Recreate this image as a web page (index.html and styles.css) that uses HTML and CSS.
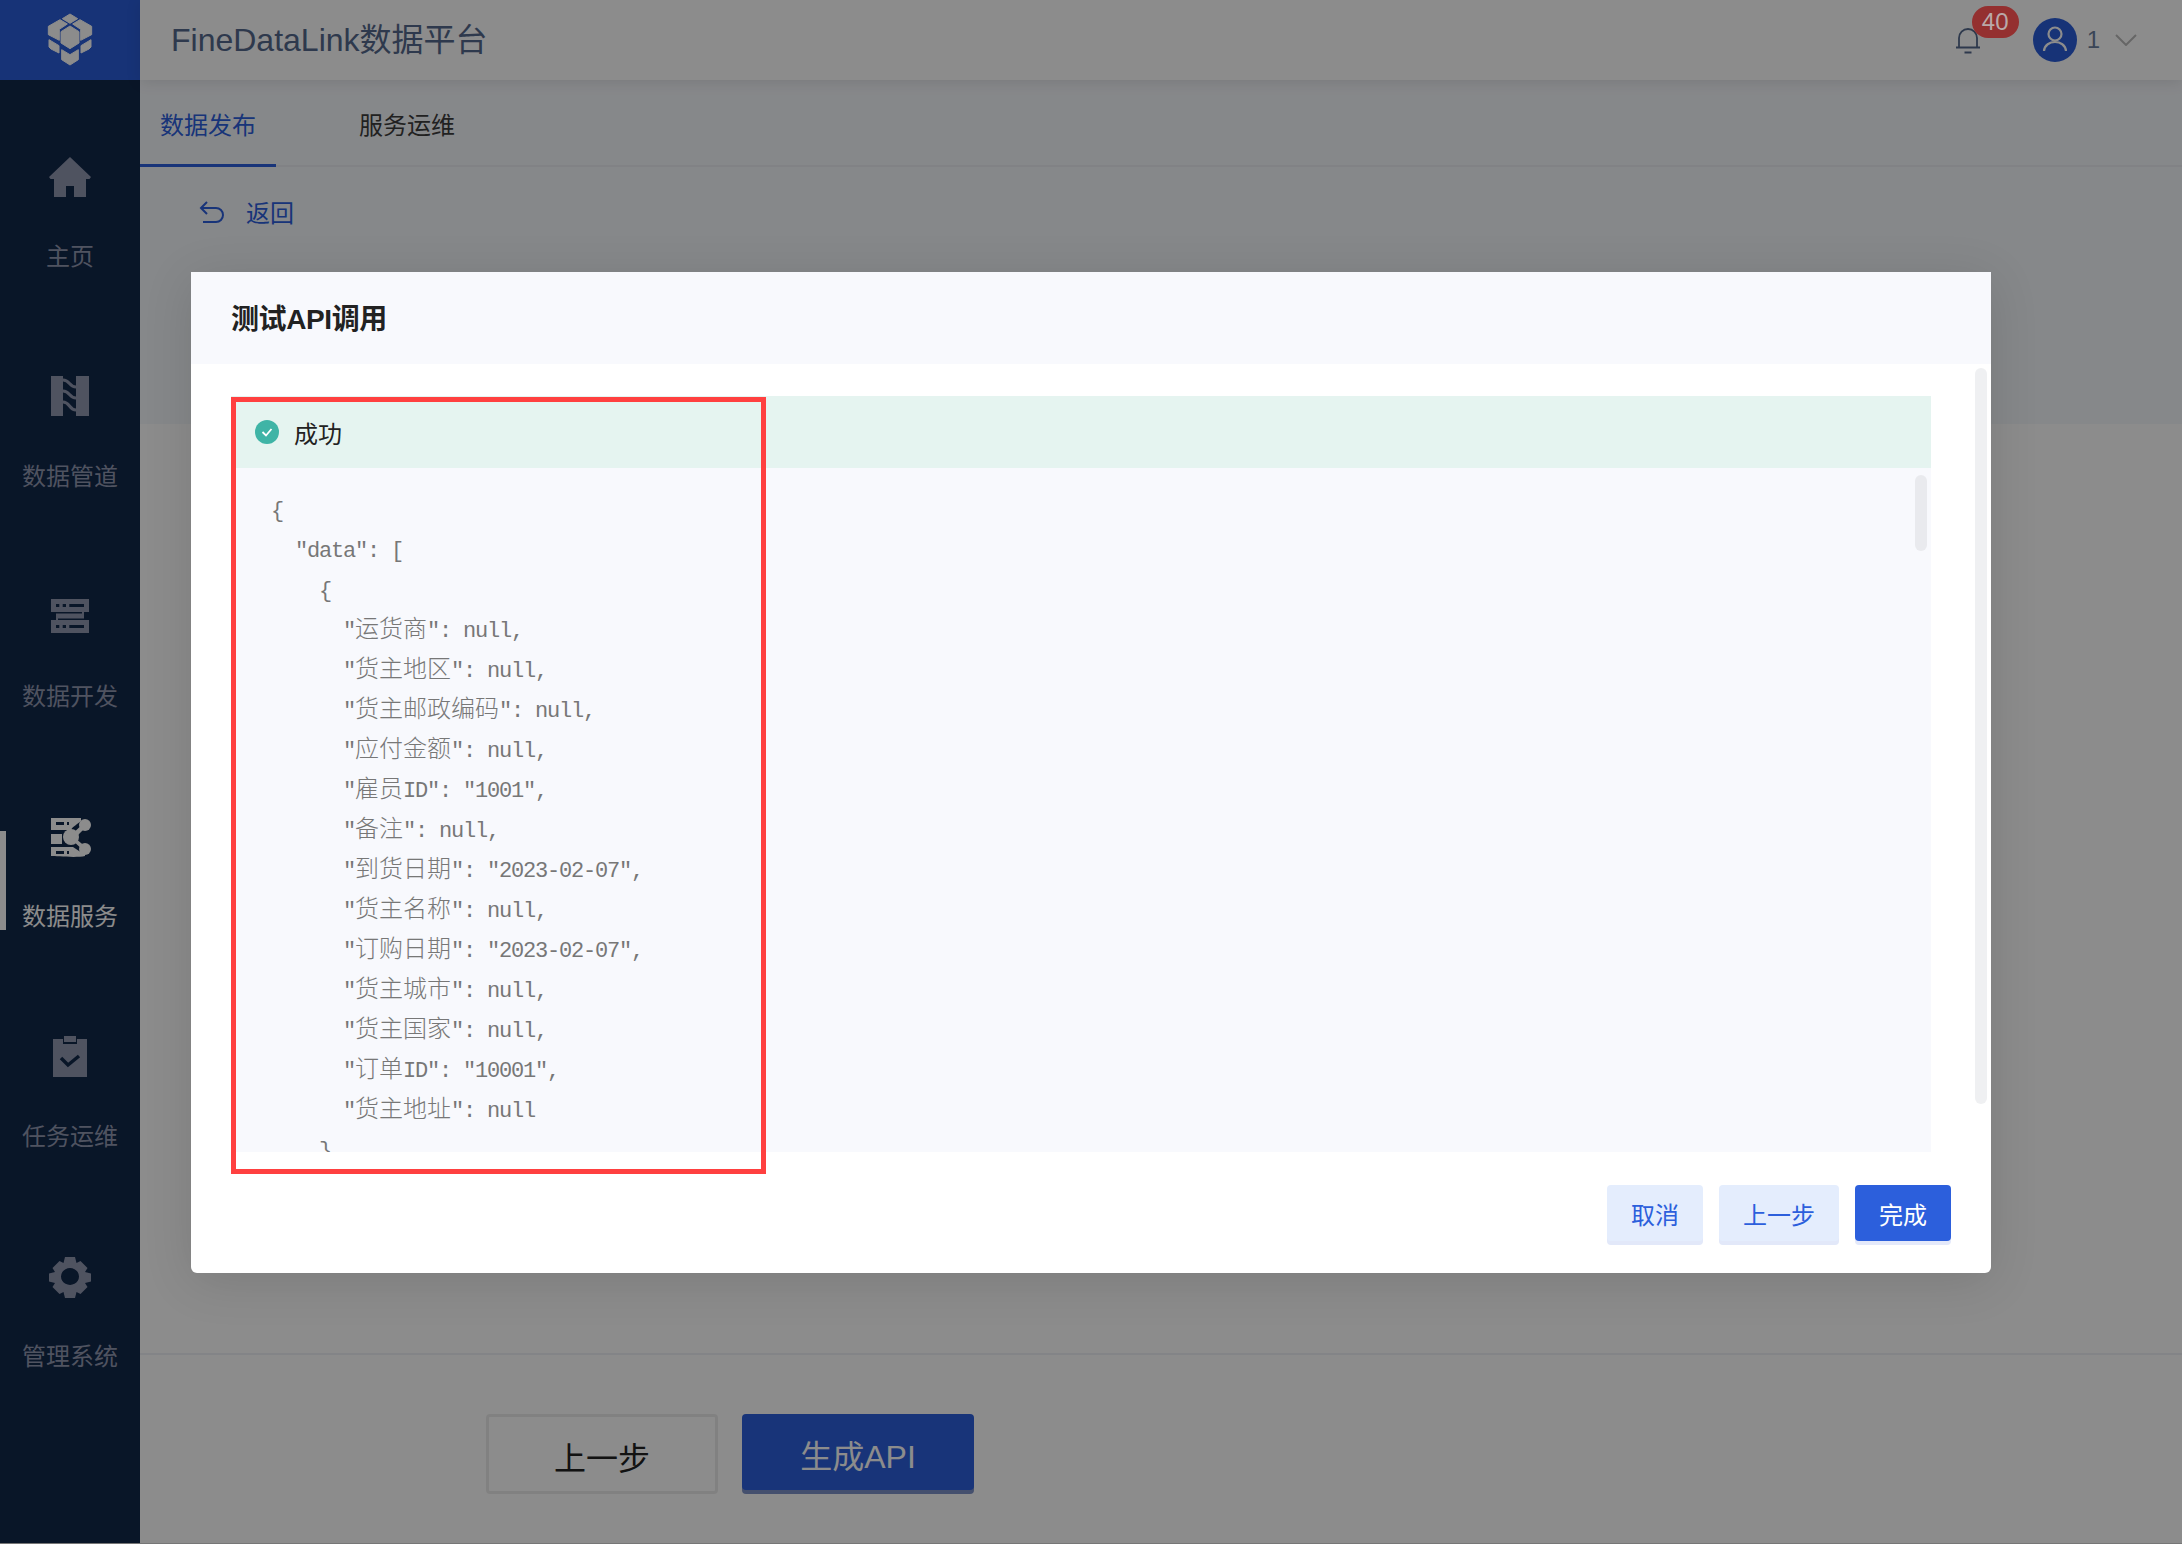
FILE: index.html
```html
<!DOCTYPE html>
<html lang="zh-CN">
<head>
<meta charset="utf-8">
<title>FineDataLink数据平台</title>
<link rel="stylesheet" href="styles.css">
</head>
<body>
<div class="app">
  <aside class="sidebar">
    <div class="logo">
      <svg class="logo-mark" viewBox="-5 0 180 192" width="60" height="64"><g fill="#fff" stroke="#fff" stroke-width="3" stroke-linejoin="round"><path d="M62 32 85 18l23 14-23 14z"/><path d="M85 54l27 17v34l-27 17-27-17V71z"/><path d="M20 55l35-20 22 13-24 16v33L20 80z"/><path d="M150 55l-35-20-22 13 24 16v33l33-17z"/><path d="M22 95l30 18v22l-24-12-6-6z"/><path d="M148 95l-30 18v22l24-12 6-6z"/><path d="M60 125l25 15 25-15v30l-25 16-25-16z"/></g></svg>
    </div>
    <nav class="nav">
      <a class="nav-item">
        <svg class="nav-icon" viewBox="0 0 48 48"><path d="M24 4 45 24l-1.500 2H40v18H28V33h-8v11H8V26H4.500L3 24z"/></svg>
        <span>主页</span>
      </a>
      <a class="nav-item">
        <svg class="nav-icon" viewBox="0 0 48 48"><path d="M5 3h12v40H5zM30 3h13v40H30z"/><path class="wave" d="M17 7c7 0 6 7 13 7M17 18c7 0 6 7 13 7M17 29c7 0 6 8 13 8"/></svg>
        <span>数据管道</span>
      </a>
      <a class="nav-item">
        <svg class="nav-icon" viewBox="0 0 48 48"><path d="M5 6h38v13H5zM10 19h28v8H10zM5 27h38v13H5z"/><path class="cut-fill" d="M10 11h3.300v3H10zM16.700 11H20v3h-3.300zM23.300 11H38v3H23.300zM10 32h3.300v3H10zM16.700 32H20v3h-3.300zM23.300 32H38v3H23.300zM10 19h26v1.500H10zM12 25.500h26V27H12z"/></svg>
        <span>数据开发</span>
      </a>
      <a class="nav-item active">
        <svg class="nav-icon" viewBox="0 0 48 48"><path d="M5 5h30v3c-3 3-8 5-10 9H5zM5 21h11v10H5zM5 34h22l6 4 6 3v2c-8 2-30 0-34 0z"/><path class="cut-fill" d="M10 9h8v3h-8zM21 9h2v3h-2zM10 38h8v3h-8zM21 38h2v3h-2z"/><circle cx="25" cy="24" r="8"/><circle cx="39" cy="12" r="6"/><circle cx="39" cy="36" r="6"/><path d="M25 22 38 10l3 3-12 12 12 10-3 3-13-12z"/></svg>
        <span>数据服务</span>
      </a>
      <a class="nav-item">
        <svg class="nav-icon" viewBox="0 0 48 48"><path d="M7 6h10v5h14V6h10v38H7zM18 3h12v6H18z"/><path class="cut" d="m15 25 7 7 11-9" fill="none" stroke-width="3.500"/></svg>
        <span>任务运维</span>
      </a>
      <a class="nav-item">
        <svg class="nav-icon" viewBox="0 0 48 48"><path fill-rule="evenodd" d="M19 4h10l1.500 6 4-2 7 7-2.500 4 6 1.500v8l-6 1.500 2.500 4-7 7-4-2-1.500 6H19l-1.500-6-4 2-7-7 2.500-4-6-1.500v-8l6-1.500-2.500-4 7-7 4 2zM24 15a9 8.500 0 1 0 .01 0z"/></svg>
        <span>管理系统</span>
      </a>
    </nav>
  </aside>
  <main class="main">
    <header class="topbar">
      <h1 class="product">FineDataLink数据平台</h1>
      <div class="top-actions">
        <div class="bell-wrap">
          <svg class="bell" viewBox="0 0 26 27" width="26" height="27"><path d="M4 20V11a9 9 0 0 1 18 0v9M1 20.500h24M9.500 25.500h7" fill="none" stroke="#55698c" stroke-width="1.800"/></svg>
          <span class="badge">40</span>
        </div>
        <div class="avatar">
          <svg viewBox="0 0 44 44" width="44" height="44"><g fill="none" stroke="#fff" stroke-width="2.200"><circle cx="22" cy="16" r="6.500"/><path d="M11 33c1-12 21-12 22 0"/></g></svg>
        </div>
        <span class="user">1</span>
        <svg class="chevron" viewBox="0 0 22 12" width="22" height="12"><path d="M1 1l10 10L21 1" fill="none" stroke="#bbb" stroke-width="2"/></svg>
      </div>
    </header>
    <div class="tabs">
      <a class="tab active">数据发布</a>
      <a class="tab">服务运维</a>
    </div>
    <div class="back-row">
      <svg viewBox="0 0 26 26" width="26" height="26"><path d="M8 2 2 8l6 6M2 8h15a7 7 0 0 1 0 14H4" fill="none" stroke="#2c5fdc" stroke-width="2"/></svg>
      <span class="back-label">返回</span>
    </div>
    <div class="content"></div>
    <footer class="page-footer">
      <button class="page-btn ghost">上一步</button>
      <button class="page-btn primary">生成API</button>
    </footer>
  </main>
</div>

<div class="mask"></div>

<section class="modal">
  <h2 class="modal-title">测试API调用</h2>
  <div class="modal-body">
    <div class="result-head">
      <svg viewBox="0 0 24 24" width="24" height="24"><circle cx="12" cy="12" r="12" fill="#3fb4a6"/><path d="m7.500 12 3.500 3.500 5.500-6.500" fill="none" stroke="#fff" stroke-width="1.800"/></svg>
      <span>成功</span>
    </div>
    <div class="code">
      <div class="ln l0"><span>{</span></div>
      <div class="ln l1"><span>"data": [</span></div>
      <div class="ln l2"><span>{</span></div>
      <div class="ln l3"><span>"</span><span class="cjk">运货商</span><span>": null,</span></div>
      <div class="ln l3"><span>"</span><span class="cjk">货主地区</span><span>": null,</span></div>
      <div class="ln l3"><span>"</span><span class="cjk">货主邮政编码</span><span>": null,</span></div>
      <div class="ln l3"><span>"</span><span class="cjk">应付金额</span><span>": null,</span></div>
      <div class="ln l3"><span>"</span><span class="cjk">雇员</span><span>ID": "1001",</span></div>
      <div class="ln l3"><span>"</span><span class="cjk">备注</span><span>": null,</span></div>
      <div class="ln l3"><span>"</span><span class="cjk">到货日期</span><span>": "2023-02-07",</span></div>
      <div class="ln l3"><span>"</span><span class="cjk">货主名称</span><span>": null,</span></div>
      <div class="ln l3"><span>"</span><span class="cjk">订购日期</span><span>": "2023-02-07",</span></div>
      <div class="ln l3"><span>"</span><span class="cjk">货主城市</span><span>": null,</span></div>
      <div class="ln l3"><span>"</span><span class="cjk">货主国家</span><span>": null,</span></div>
      <div class="ln l3"><span>"</span><span class="cjk">订单</span><span>ID": "10001",</span></div>
      <div class="ln l3"><span>"</span><span class="cjk">货主地址</span><span>": null</span></div>
      <div class="ln l2"><span>}</span></div>
      <div class="thumb-inner"></div>
    </div>
  </div>
  <div class="modal-footer">
    <button class="btn soft btn-cancel">取消</button>
    <button class="btn soft btn-prev">上一步</button>
    <button class="btn solid btn-done">完成</button>
  </div>
  <div class="thumb-outer"></div>
  <div class="highlight"></div>
</section>
</body>
</html>
```

FILE: styles.css
```css
* { box-sizing: border-box; }
html, body { margin: 0; height: 100%; }
body {
  width: 2182px;
  height: 1544px;
  overflow: hidden;
  background: #fff;
  font-family: "Liberation Sans", "Noto Sans CJK SC", sans-serif;
}
h1, h2 { margin: 0; font-weight: 400; }
button { font: inherit; border: 0; padding: 0; }

.app { display: flex; height: 1544px; border-bottom: 1px solid #d8d8d8; }

/* sidebar */
.sidebar { width: 140px; flex: none; background: #122849; display: flex; flex-direction: column; }
.logo { height: 80px; background: #2a5dd9; display: flex; align-items: center; justify-content: center; }
.nav { padding-top: 30px; display: flex; flex-direction: column; }
.nav-item {
  position: relative;
  height: 220px;
  padding-top: 43px;
  display: flex;
  flex-direction: column;
  align-items: center;
  gap: 39px;
  color: #9097b0;
  font-size: 24px;
  line-height: 34px;
}
.nav-item span { white-space: nowrap; }
.nav-icon { width: 48px; height: 48px; fill: #9097b0; stroke: none; }
.nav-icon .cut { stroke: #122849; fill: none; }
.nav-icon .cut-fill { fill: #122849; }
.nav-icon .wave { fill: none; stroke: #9097b0; stroke-width: 3; }
.nav-item.active { color: #fff; }
.nav-item.active .nav-icon { fill: #fff; }
.nav-item.active::before {
  content: "";
  position: absolute;
  left: 0;
  top: 61px;
  width: 6px;
  height: 99px;
  background: #fff;
}

/* main column */
.main { flex: 1; display: flex; flex-direction: column; min-width: 0; }
.topbar {
  height: 80px;
  flex: none;
  display: flex;
  align-items: center;
  justify-content: space-between;
  padding: 0 45px 0 31px;
  background: #fff;
  box-shadow: 0 2px 14px rgba(0, 0, 0, .1);
  position: relative;
}
.product { font-size: 32px; line-height: 82px; color: #55698c; white-space: nowrap; }
.top-actions { display: flex; align-items: center; }
.bell-wrap { width: 26px; height: 27px; margin-right: 52px; position: relative; }
.bell { display: block; }
.badge {
  position: absolute;
  z-index: 20;
  left: 17px;
  top: -21px;
  width: 47px;
  height: 32px;
  border-radius: 16px;
  background: #943030;
  color: #b9a9a9;
  font-size: 24px;
  line-height: 32px;
  text-align: center;
}
.avatar { width: 44px; height: 44px; border-radius: 50%; background: #2a5dd9; }
.avatar svg { display: block; }
.user { margin-left: 10px; font-size: 24px; color: #6b7f9e; }
.chevron { margin-left: 15px; }

.tabs {
  height: 87px;
  flex: none;
  display: flex;
  background: #f5f7fb;
  border-bottom: 2px solid #ebedf2;
}
.tab {
  height: 88px;
  width: 136px;
  padding-left: 20px;
  font-size: 24px;
  line-height: 92px;
  color: #3d3d3d;
  white-space: nowrap;
}
.tab + .tab { margin-left: 63px; }
.tab.active { color: #2c5fdc; border-bottom: 4px solid #2c5fdc; }

.back-row {
  height: 257px;
  flex: none;
  display: flex;
  align-items: flex-start;
  gap: 21px;
  padding: 33px 0 0 59px;
  background: #f5f7fb;
  color: #2c5fdc;
  font-size: 24px;
  line-height: 26px;
}
.back-row svg { flex: none; }
.back-label { padding-top: 1px; }
.content { flex: 1; background: #fff; }
.page-footer {
  height: 190px;
  flex: none;
  display: flex;
  align-items: flex-start;
  gap: 24px;
  padding: 59px 0 0 346px;
  background: #fff;
  border-top: 2px solid #eff0f6;
}
.page-btn { width: 232px; padding-top: 3px; font-size: 32px; border-radius: 4px; font-family: "Liberation Sans", "Noto Sans CJK SC", sans-serif; }
.page-btn.ghost { background: #fff; color: #222; height: 80px; border: 3px solid #ececec; padding-top: 3px; }
.page-btn.primary { background: #2c5fdc; color: #fff; height: 76px; box-shadow: 0 4px 0 #7f93c8; }

/* mask and dialog */
.mask { position: absolute; inset: 0; z-index: 10; background: rgba(0, 0, 0, .45); }
.modal {
  position: absolute;
  z-index: 15;
  left: 191px;
  top: 272px;
  width: 1800px;
  height: 1001px;
  background: #fff;
  border-radius: 6px;
  box-shadow: 0 8px 50px rgba(0, 0, 0, .12);
  display: flex;
  flex-direction: column;
}
.modal-title {
  height: 92px;
  flex: none;
  padding-left: 40px;
  background: #f8f9fd;
  color: #222;
  font-size: 28px;
  font-weight: 700;
  letter-spacing: -.4px;
  line-height: 95px;
}
.modal-body { padding: 32px 60px 0 40px; flex: none; }
.result-head {
  height: 72px;
  display: flex;
  align-items: center;
  gap: 15px;
  padding: 0 0 0 24px;
  background: #e5f4f0;
  color: #222;
  font-size: 24px;
}
.code {
  position: relative;
  height: 684px;
  overflow: hidden;
  background: #f8f9fd;
  padding: 24px 0 0 40px;
  font-family: "Liberation Mono", "Noto Sans CJK SC", monospace;
  font-size: 22px;
  letter-spacing: -1.200px;
  color: #777;
}
.ln { height: 40px; line-height: 40px; white-space: pre; }
.l1 { padding-left: 24px; }
.l2 { padding-left: 48px; }
.l3 { padding-left: 72px; }
.cjk { font-family: "Noto Sans CJK SC", sans-serif; font-size: 24px; font-weight: 300; letter-spacing: 0; line-height: 24px; }
.thumb-inner { position: absolute; right: 4px; top: 7px; width: 12px; height: 76px; border-radius: 6px; background: #e9eaee; }
.thumb-outer { position: absolute; right: 4px; top: 96px; width: 12px; height: 736px; border-radius: 6px; background: #eff0f2; }
.modal-footer { display: flex; justify-content: flex-end; gap: 16px; padding: 33px 40px 0 0; }
.btn { height: 56px; margin-bottom: 4px; border-radius: 4px; font-size: 24px; font-family: "Liberation Sans", "Noto Sans CJK SC", sans-serif; }
.btn-cancel, .btn-done { width: 96px; }
.btn-prev { width: 120px; }
.soft { background: #e4edfd; color: #2c5fdc; box-shadow: 0 4px 0 #e2e8f9; }
.solid { background: #2c5fdc; color: #fff; box-shadow: 0 4px 0 #e4e9fa; }
.highlight {
  position: absolute;
  left: 40px;
  top: 125px;
  width: 535px;
  height: 777px;
  border: 5px solid #ff4040;
  pointer-events: none;
}
```
